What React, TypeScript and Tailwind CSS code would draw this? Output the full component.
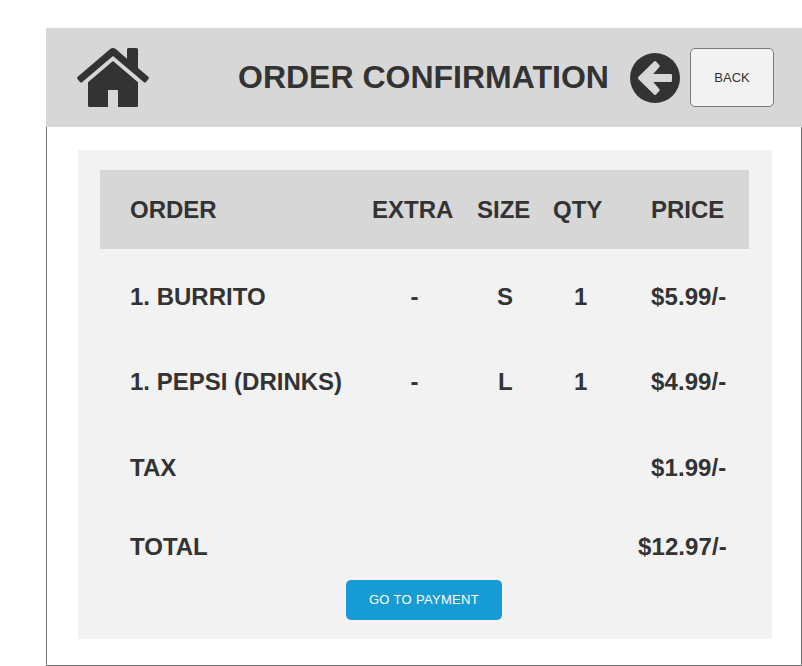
import type { ReactNode } from "react";

function HomeIcon() {
  return (
    <svg className="ml-[31px] mt-5 h-[60px] w-[72px] shrink-0" viewBox="0 0 72 60" fill="#333333">
      <path d="M36 13 L61 34.200 V57.500 Q61 59 59.500 59 H41 V42 H31 V59 H12.500 Q11 59 11 57.500 V34.200 Z" />
      <path d="M33.200 1 Q36 -1 38.800 1 L50 10.700 V1.500 Q50 0 51.500 0 H59.500 Q61 0 61 1.500 V20 L71.300 28.800 Q72.300 30 71.500 31 L69 34 Q68 35 67 34.200 L36 8 L5 34.200 Q4 35 3 34 L.5 31 Q-.3 30 .7 28.800 Z" />
    </svg>
  );
}

function BackIcon() {
  return (
    <svg className="mt-[25px] h-[50px] w-[50px] shrink-0" viewBox="0 0 50 50">
      <circle cx="25" cy="25" r="25" fill="#333333" />
      <path d="M8.500 23.800 L24 8.600 Q25 7.600 26 8.600 L29.300 12 Q30.300 13 29.300 14 L23.300 21 H40.800 Q42 21 42 22.200 V27.800 Q42 29 40.800 29 H23.300 L29.300 36 Q30.300 37 29.300 38 L26 41.400 Q25 42.400 24 41.400 L8.500 26.200 Q7.300 25 8.500 23.800 Z" fill="#d7d7d7" />
    </svg>
  );
}

function Row({ className, children }: { className: string; children: ReactNode }) {
  return <div className={`flex whitespace-nowrap text-[24px] leading-[28px] font-bold ${className}`}>{children}</div>;
}

export default function App() {
  return (
    <div className="h-[666px] w-[802px] overflow-hidden bg-white pl-[46px] pt-7 font-['Liberation_Sans',Arial,sans-serif] text-[#333333]">
      <header className="flex h-[99px] w-[756px] bg-[#d7d7d7]">
        <HomeIcon />
        <h1 className="ml-[89px] mt-[30px] w-[392px] whitespace-nowrap text-[32px] leading-[38px] font-bold">ORDER CONFIRMATION</h1>
        <BackIcon />
        <button className="ml-[10px] mt-5 h-[59px] w-[84px] rounded-[5px] border border-[#797979] bg-[#f2f2f2] text-[13px]">BACK</button>
      </header>
      <main className="h-[539px] w-[756px] border border-t-0 border-[#797979] pl-[31px] pt-[23px]">
        <section className="h-[489px] w-[694px] bg-[#f2f2f2] pl-[22px] pt-5">
          <Row className="h-[79px] w-[649px] bg-[#d7d7d7] pl-[30px] pt-[26px]">
            <span className="w-[242px]">ORDER</span><span className="w-[105px]">EXTRA</span><span className="w-[76px]">SIZE</span><span className="w-[98px]">QTY</span><span>PRICE</span>
          </Row>
          <Row className="h-[85px] pl-[30px] pt-[34px]">
            <span className="w-[280.500px]">1. BURRITO</span><span className="w-[86.500px]">-</span><span className="w-[77px]">S</span><span className="w-[77px]">1</span><span className="tracking-[0.1px]">$5.99/-</span>
          </Row>
          <Row className="h-[85px] pl-[30px] pt-[34px]">
            <span className="w-[280.500px]">1. PEPSI (DRINKS)</span><span className="w-[87.500px]">-</span><span className="w-[76px]">L</span><span className="w-[77px]">1</span><span className="tracking-[0.1px]">$4.99/-</span>
          </Row>
          <Row className="h-[86px] pl-[30px] pt-[35px]">
            <span className="w-[521px]">TAX</span><span className="tracking-[0.1px]">$1.99/-</span>
          </Row>
          <Row className="h-[75px] pl-[30px] pt-[28px]">
            <span className="w-[508px]">TOTAL</span><span className="tracking-[0.1px]">$12.97/-</span>
          </Row>
          <button className="ml-[246px] block h-10 w-[156px] rounded-[5px] bg-[#169bd5] text-[13px] tracking-[0.33px] text-white">GO TO PAYMENT</button>
        </section>
      </main>
    </div>
  );
}
